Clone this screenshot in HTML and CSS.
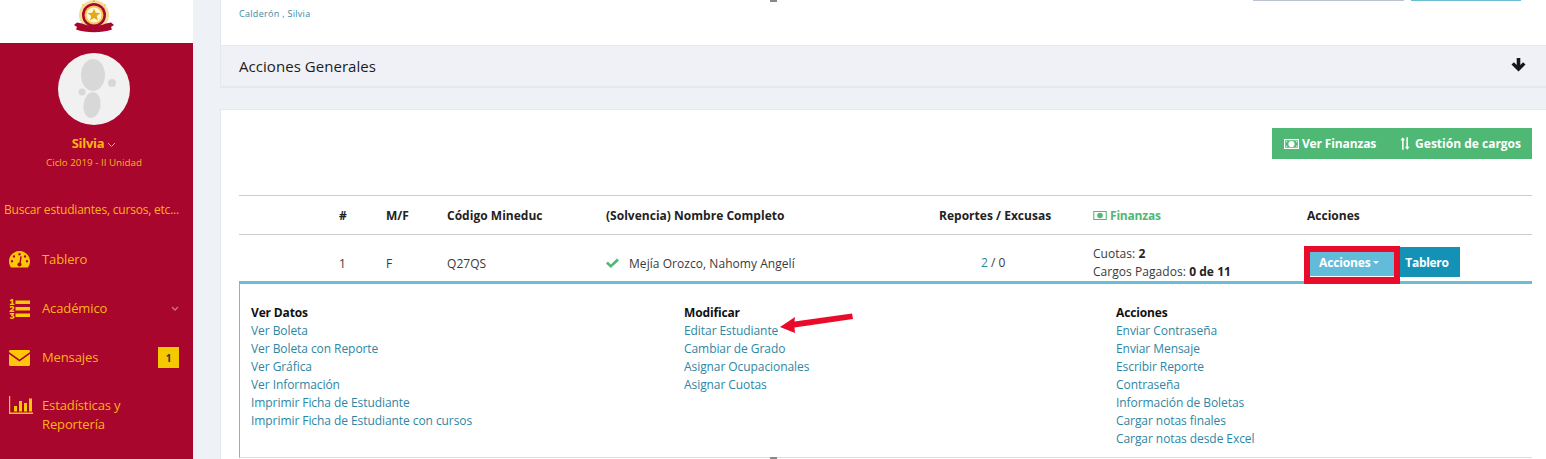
FILE: index.html
```html
<!DOCTYPE html>
<html lang="es">
<head>
<meta charset="utf-8">
<title>Estudiantes</title>
<link rel="stylesheet" href="styles.css">
</head>
<body>
<div class="app">
  <aside class="sidebar">
    <div class="brand">
      <svg class="crest" width="40" height="34" viewBox="0 0 40 34">
        <circle cx="20" cy="15" r="15" fill="#f6dc9a"/>
        <path d="M20 0l1 2h-2zM8 4l2 1-1 1zM32 4l-2 1 1 1z" fill="#d99a1c"/>
        <circle cx="20" cy="15" r="12" fill="#a8062d"/>
        <circle cx="20" cy="15" r="9.500" fill="#f1c94e"/>
        <circle cx="20" cy="15" r="7.500" fill="#fff6d6"/>
        <path d="M20 8.500l1.700 4.300 4.600.3-3.500 3 1.100 4.500-3.900-2.500-3.900 2.500 1.100-4.500-3.500-3 4.600-.3z" fill="#e0a81c"/>
        <path d="M0 25l3-2.500 5 1c7 3 17 3 24 0l5-1 3 2.500-3 2 1 2.500c-10 3.500-26 3.500-36 0l1-2.500z" fill="#a8062d"/>
      </svg>
    </div>
    <div class="side-body">
      <div class="avatar">
        <svg width="72" height="72" viewBox="0 0 72 72">
          <circle cx="36" cy="36" r="36" fill="#f1f1f1"/>
          <ellipse cx="35" cy="22" rx="12" ry="16" fill="#d8d8d8"/>
          <ellipse cx="34" cy="52" rx="8.500" ry="13" fill="#d8d8d8" transform="rotate(8 34 52)"/>
          <circle cx="54" cy="30" r="4" fill="#d8d8d8"/>
          <circle cx="24" cy="39" r="3.500" fill="#d8d8d8"/>
        </svg>
      </div>
      <div class="user-name">Silvia <svg width="9" height="6" viewBox="0 0 9 6"><path d="M1 1l3.500 3.500L8 1" fill="none" stroke="currentColor" stroke-width="1"/></svg></div>
      <div class="user-cycle">Ciclo 2019 - II Unidad</div>
      <div class="search">Buscar estudiantes, cursos, etc...</div>
      <nav class="menu">
        <a class="menu-item">
          <svg class="menu-icon" width="21" height="17" viewBox="0 0 21 17"><path fill-rule="evenodd" d="M10.500 0C4.700 0 0 4.600 0 10.300c0 2.300.7 4.500 2 6.200h17c1.300-1.700 2-3.900 2-6.200C21 4.600 16.300 0 10.500 0zM10.500 2a1.200 1.200 0 1 1 0 2.400 1.200 1.200 0 0 1 0-2.400zM5 4.200a1.200 1.200 0 1 1 0 2.400 1.200 1.200 0 0 1 0-2.400zM16 4.200a1.200 1.200 0 1 1 0 2.400 1.200 1.200 0 0 1 0-2.400zM3 9a1.200 1.200 0 1 1 0 2.400A1.200 1.200 0 0 1 3 9zM18 9a1.200 1.200 0 1 1 0 2.400A1.200 1.200 0 0 1 18 9zM12.800 5.500l-1 6.300c.5.500.8 1 .8 1.700 0 1.200-1 2-2.100 2s-2.100-.8-2.100-2c0-1.200.9-2 2-2.100l1-6.200z"/></svg>
          <span>Tablero</span>
        </a>
        <a class="menu-item">
          <svg class="menu-icon" width="21" height="20" viewBox="0 0 21 20"><path d="M6.500 1.500H21v3.500H6.500zM6.500 8H21v3.500H6.500zM6.500 14.500H21V18H6.500z"/><path d="M.8 1.300L2.800 0h1.400v4.700h1.200V6H.8V4.700h1.700V1.800L1.300 2.500zM.6 7.500C1.500 6.800 5.300 6.500 5.300 9c0 1.200-1.500 1.700-2.600 2.500h2.600V13H.6v-1.300c1-1 3-1.700 3-2.600 0-.8-1.700-.5-2.500 0zM.8 14h4.400v1.200L4 16.300C5.300 16.500 5.500 17.200 5.500 18c0 2.300-3.200 2.400-4.900 1.300l.6-1.100c1 .6 2.600.6 2.600-.3 0-.6-.9-.7-1.600-.6l-.2-.8 1-1.100H.8z"/></svg>
          <span>Académico</span>
          <svg class="menu-caret" width="8" height="6" viewBox="0 0 8 6"><path d="M1 1l3 3 3-3" fill="none" stroke="currentColor" stroke-width="1.300"/></svg>
        </a>
        <a class="menu-item">
          <svg class="menu-icon" width="21" height="16" viewBox="0 0 21 16"><path d="M1.500 0h18C20.300 0 21 .7 21 1.500v.6l-10.500 7.500L0 2.100v-.6C0 .7.700 0 1.500 0zM0 4l10.500 7.500L21 4v10.500c0 .8-.7 1.500-1.500 1.500h-18C.7 16 0 15.300 0 14.500z"/></svg>
          <span>Mensajes</span>
          <b class="badge">1</b>
        </a>
        <a class="menu-item menu-two">
          <svg class="menu-icon" width="24" height="18" viewBox="0 0 24 18"><path d="M0 0h1.200v16.500H24V18H0z"/><path d="M5 10h3v5.500H5zM10 5h3v10.500h-3zM15 7h3v8.500h-3zM20 2.500h3v13h-3z"/></svg>
          <span>Estadísticas y<br>Reportería</span>
        </a>
      </nav>
    </div>
  </aside>

  <main class="content">
    <section class="card top-card">
      <div class="top-strip">
        <i class="strip-grey"></i>
        <i class="strip-blue"></i>
      </div>
      <i class="tick tick-top"></i>
      <a class="author">Calderón , Silvia</a>
    </section>
    <section class="panel-head">
      <h2>Acciones Generales</h2>
      <svg class="panel-arrow" width="15" height="14" viewBox="0 0 15 14"><path d="M5.700 0h3.600v7l2.800-2.800L14.500 6.600 7.500 13.600.5 6.600 2.900 4.200 5.700 7z" fill="#16161c"/></svg>
    </section>
    <section class="card list-card">
      <div class="toolbar">
        <div class="btn-group">
          <a class="btn-green">
            <svg width="15" height="10" viewBox="0 0 15 10"><path fill-rule="evenodd" d="M0 0h15v10H0zM1.200 1.200v7.600h12.600V1.200z" fill="#fff"/><circle cx="7.500" cy="5" r="3.100" fill="#fff"/><path d="M2 2.200h1.500L2 3.700zM13 2.200h-1.500L13 3.700zM2 7.800h1.500L2 6.300zM13 7.800h-1.500L13 6.300z" fill="#fff"/></svg>
            Ver Finanzas
          </a>
          <a class="btn-green btn-wide">
            <svg width="10" height="15" viewBox="0 0 11 14"><path d="M3 0l2.500 3.500H4V14H2.300V3.500H.5zM8 14l-2.500-3.500H7V0h1.700v10.500h1.800z" fill="#fff"/></svg>
            Gestión de cargos
          </a>
        </div>
      </div>
      <div class="grid-row grid-head">
        <span></span>
        <span>#</span>
        <span>M/F</span>
        <span>Código Mineduc</span>
        <span>(Solvencia) Nombre Completo</span>
        <span>Reportes / Excusas</span>
        <span class="finance">
          <svg width="14" height="9" viewBox="0 0 15 10"><path fill-rule="evenodd" d="M0 0h15v10H0zM1.200 1.200v7.600h12.600V1.200z" fill="#4fb874"/><circle cx="7.500" cy="5" r="3.100" fill="#4fb874"/></svg>
          Finanzas
        </span>
        <span>Acciones</span>
      </div>
      <div class="grid-row grid-data">
        <span></span>
        <span>1</span>
        <span>F</span>
        <span>Q27QS</span>
        <span class="student">
          <svg width="13" height="10" viewBox="0 0 13 10"><path d="M1.800 3.600L4.800 6.600 11 .5 13 2.500 4.800 10 0 5.500z" fill="#4fb874"/></svg>
          Mejía Orozco, Nahomy Angelí
        </span>
        <span class="reports"><a class="link">2</a> / 0</span>
        <span class="fees">Cuotas: <b>2</b><br>Cargos Pagados: <b>0 de 11</b></span>
        <span class="row-actions">
          <a class="btn-acciones">Acciones <i class="caret"></i></a>
          <a class="btn-tablero">Tablero</a>
        </span>
      </div>
      <div class="details">
        <div class="col">
          <h3>Ver Datos</h3>
          <a class="link">Ver Boleta</a>
          <a class="link">Ver Boleta con Reporte</a>
          <a class="link">Ver Gráfica</a>
          <a class="link">Ver Información</a>
          <a class="link">Imprimir Ficha de Estudiante</a>
          <a class="link">Imprimir Ficha de Estudiante con cursos</a>
        </div>
        <div class="col">
          <h3>Modificar</h3>
          <a class="link">Editar Estudiante</a>
          <a class="link">Cambiar de Grado</a>
          <a class="link">Asignar Ocupacionales</a>
          <a class="link">Asignar Cuotas</a>
        </div>
        <div class="col">
          <h3>Acciones</h3>
          <a class="link">Enviar Contraseña</a>
          <a class="link">Enviar Mensaje</a>
          <a class="link">Escribir Reporte</a>
          <a class="link">Contraseña</a>
          <a class="link">Información de Boletas</a>
          <a class="link">Cargar notas finales</a>
          <a class="link">Cargar notas desde Excel</a>
        </div>
      </div>
      <i class="tick tick-bottom"></i>
      <div class="note-box"></div>
      <svg class="note-arrow" width="74" height="21" viewBox="0 0 74 21"><path d="M1 14L16 4l-.5 4.500L73 .5 74 6 15.500 14.500 16 20z" fill="#ea0a2a"/></svg>
    </section>
  </main>
</div>
</body>
</html>
```
FILE: styles.css
```css
* { box-sizing: border-box; }
html, body { margin: 0; height: 459px; overflow: hidden; }
body { font-family: "Open Sans", "Noto Sans", sans-serif; font-size: 12px; color: #3a3a3a; background: #eef1f6; }
a { text-decoration: none; }
.app { display: flex; height: 459px; }

.sidebar { width: 193px; flex: none; display: flex; flex-direction: column; background: #a8062d; color: #fcb415; }
.brand { height: 43px; background: #fff; display: flex; justify-content: center; overflow: hidden; padding-right: 5px; }
.side-body { display: flex; flex-direction: column; padding-top: 10px; }
.avatar { display: flex; justify-content: center; height: 72px; padding-right: 5px; }
.user-name { margin-top: 9px; padding-right: 5px; text-align: center; font-size: 13px; font-weight: 700; line-height: 18px; letter-spacing: -.3px; }
.user-cycle { margin-top: 5px; padding-right: 5px; text-align: center; font-size: 9.8px; line-height: 12px; }
.search { margin-top: 33px; padding-left: 4px; font-size: 12px; line-height: 16px; white-space: nowrap; letter-spacing: -.2px; }
.menu { display: flex; flex-direction: column; padding-top: 17px; }
.menu-item { display: flex; align-items: center; height: 49px; padding: 0 14px 0 9px; color: #fcb415; font-size: 13px; letter-spacing: -.12px; position: relative; }
.menu-item span { position: absolute; left: 42px; line-height: 19px; }
.menu-icon { fill: #ffc60a; flex: none; }
.menu-two { align-items: flex-start; }
.menu-two .menu-icon { margin-top: 14px; }
.menu-two span { top: 14px; }
.menu-caret { margin-left: auto; color: #c9768c; }
.badge { margin-left: auto; width: 21px; height: 21px; display: flex; align-items: center; justify-content: center; background: #f5c800; color: #333; font-size: 10px; font-weight: 700; }

.content { flex: 1; padding-left: 27px; min-width: 0; }
.card { background: #fff; border-left: 1px solid #e4e7ee; }
.top-card { height: 45px; position: relative; padding-left: 18px; }
.top-strip { display: flex; justify-content: flex-end; gap: 7px; padding-right: 25px; height: 1px; }
.top-strip i { display: block; height: 1px; }
.strip-grey { width: 151px; background: #bcc3d0; }
.strip-blue { width: 110px; background: #6bbed6; }
.tick { position: absolute; left: 549px; width: 7px; height: 2px; background: #888; }
.tick-top { top: 0; }
.tick-bottom { top: 347px; }
.author { display: block; margin-top: 7px; font-size: 9px; line-height: 12px; color: #3a8aa5; letter-spacing: .3px; }
.panel-head { height: 43px; display: flex; align-items: center; justify-content: space-between; padding: 0 20px 0 18px; background: #f0f1f6; border: 1px solid #e7e8ed; border-bottom-width: 2px; border-right: 0; }
.panel-head h2 { margin: 0; font-size: 15px; font-weight: 400; color: #1c1c1c; letter-spacing: .05px; }
.panel-arrow { margin-bottom: 3px; }
.list-card { margin-top: 21px; height: 350px; position: relative; padding: 0 14px 0 18px; border-top: 1px solid #e6e8ee; }
.toolbar { display: flex; justify-content: flex-end; padding-top: 18px; height: 85px; }
.btn-group { display: flex; gap: 24px; height: 31px; padding: 0 11px 0 12px; background: #4fb874; align-items: center; }
.btn-green { display: flex; align-items: center; gap: 3px; color: #fff; font-weight: 700; font-size: 12px; letter-spacing: -.13px; }
.btn-wide { gap: 5px; letter-spacing: 0; }
.grid-row { display: grid; grid-template-columns: 100px 47px 61px 159px 333px 154px 214px 1fr; align-items: center; }
.grid-head { height: 40px; border-top: 1px solid #ccc; border-bottom: 1px solid #ccc; font-weight: 700; color: #222; letter-spacing: .02px; }
.finance { color: #4fb874; display: flex; align-items: center; gap: 3px; letter-spacing: -.2px; }
.grid-data { height: 46px; padding-top: 10px; letter-spacing: .05px; }
.student { display: flex; align-items: center; gap: 10px; }
.reports { padding-left: 42px; }
.fees { line-height: 18px; white-space: nowrap; }
.fees b { color: #222; }
.row-actions { display: flex; height: 30px; align-self: end; margin-bottom: 4px; padding-left: 3px; }
.btn-acciones { width: 84px; display: flex; align-items: center; gap: 3px; padding: 1px 0 0 9px; background: #62bcd9; color: #fff; font-weight: 700; margin-bottom: 1px; letter-spacing: -.15px; }
.caret { display: block; border: 3.5px solid transparent; border-top-color: #fff; border-bottom: 0; }
.btn-tablero { width: 66px; display: flex; align-items: center; justify-content: center; background: #1392b5; color: #fff; font-weight: 700; letter-spacing: -.3px; }
.details { height: 177px; display: grid; grid-template-columns: 433px 432px 1fr; padding: 20px 11px 0; border: 1px solid #ddd; border-left-color: #6bbed6; border-top: 3px solid #6bbed6; border-right: 0; }
.col { display: flex; flex-direction: column; align-items: flex-start; }
.col h3 { margin: 0; font-size: 12px; line-height: 18px; font-weight: 700; color: #111; letter-spacing: -.15px; }
.link { color: #2e86a3; line-height: 18px; letter-spacing: -.07px; }
.note-box { position: absolute; left: 1083px; top: 136px; width: 96px; height: 38px; border: 6px solid #ea0a2a; border-bottom-width: 7px; }
.note-arrow { position: absolute; left: 558px; top: 203px; }
```
